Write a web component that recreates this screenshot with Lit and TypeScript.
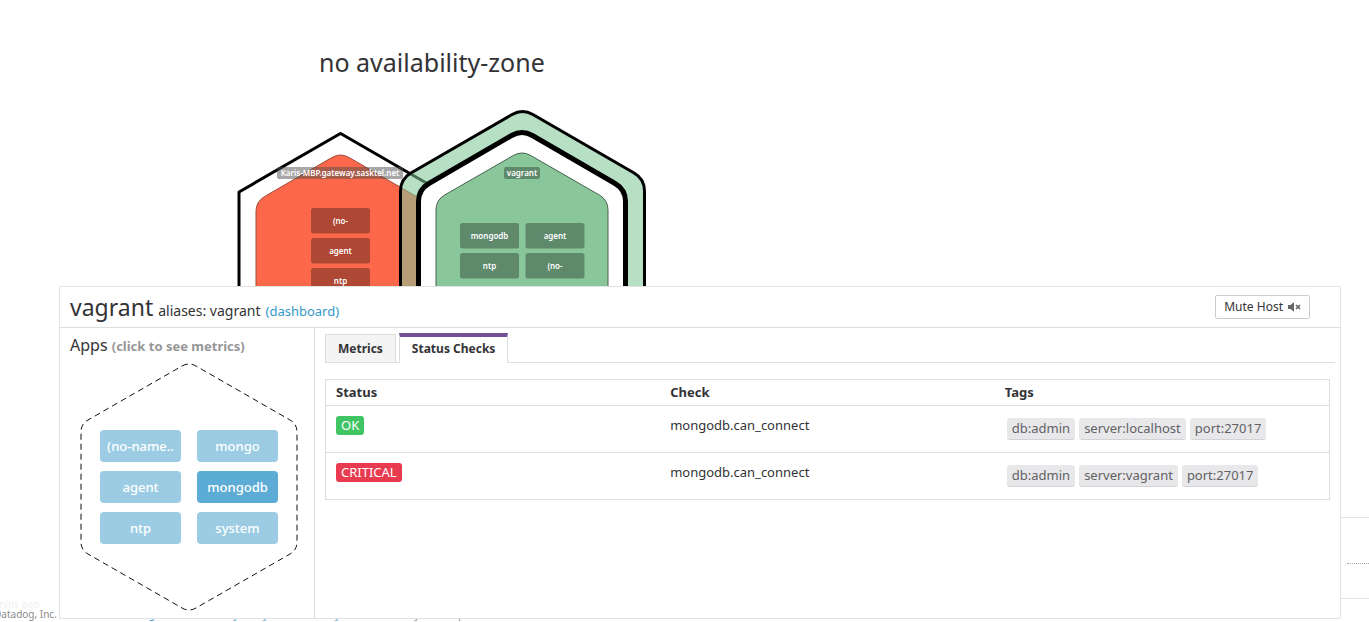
import { LitElement, html, css, svg } from "lit";
import { customElement, state } from "lit/decorators.js";
import { classMap } from "lit/directives/class-map.js";

type Point = [number, number];

/** Path of a closed polygon whose corners are rounded by the given distance. */
function roundedPath(points: Point[], r: number): string {
  const toward = (a: Point, b: Point): Point => {
    const d = Math.hypot(b[0] - a[0], b[1] - a[1]);
    return [a[0] + ((b[0] - a[0]) * r) / d, a[1] + ((b[1] - a[1]) * r) / d];
  };
  const n = points.length;
  return (
    points
      .map((p, i) => {
        const start = toward(p, points[(i + n - 1) % n]);
        const end = toward(p, points[(i + 1) % n]);
        return `${i ? "L" : "M"}${start.join(" ")}Q${p.join(" ")} ${end.join(" ")}`;
      })
      .join("") + "Z"
  );
}

/** Hexagon standing on its point: centre x, top y, half width, rise of the slope, side length. */
function hexagon(cx: number, top: number, half: number, rise: number, side: number, r: number): string {
  return roundedPath(
    [
      [cx, top],
      [cx + half, top + rise],
      [cx + half, top + rise + side],
      [cx, top + 2 * rise + side],
      [cx - half, top + rise + side],
      [cx - half, top + rise],
    ],
    r,
  );
}

@customElement("host-map")
export class HostMap extends LitElement {
  static styles = css`
    :host {
      display: block;
      height: 220px;
      overflow: hidden;
    }
    .map {
      display: block;
      overflow: visible;
    }
    .ring {
      fill: #fff;
      stroke: #000;
    }
    .halo {
      fill: rgba(127, 198, 150, 0.565);
      stroke: #000;
      stroke-width: 3px;
    }
    .alert {
      fill: #fd684a;
      stroke: #9c4a3a;
    }
    .good {
      fill: #89c79b;
      stroke: #46604e;
    }
    .chip {
      fill: rgba(0, 0, 0, 0.31);
    }
    .tag {
      fill: rgba(80, 80, 80, 0.5);
    }
    text {
      fill: #fff;
      font-size: 8px;
      font-weight: 600;
      text-anchor: middle;
    }
  `;

  private chip(x: number, y: number, label: string) {
    return svg`<rect class="chip" x=${x} y=${y} width="59" height="25.5" rx="2.5"></rect>
      <text x=${x + 29.5} y=${y + 16}>${label}</text>`;
  }

  render() {
    return html`<svg class="map" width="420" height="240" viewBox="230 100 420 240" role="img" aria-label="Host map">
      <path class="ring" stroke-width="3" d=${hexagon(340.5, 133.5, 101.5, 58.5, 118, 0.1)} />
      <path class="alert" d=${hexagon(340.5, 152.5, 84.5, 49, 100, 10)} />
      <rect class="tag" x="277" y="167" width="126" height="12" rx="2" />
      <text x="340" y="176">Karis-MBP.gateway.sasktel.net</text>
      ${this.chip(311, 208, "(no-")} ${this.chip(311, 238, "agent")} ${this.chip(311, 268, "ntp")}
      <path class="halo" d=${hexagon(522.5, 108.5, 122, 70.5, 140, 12)} />
      <path class="ring" stroke-width="5" d=${hexagon(522, 129.5, 103.5, 60, 120, 12)} />
      <path class="good" d=${hexagon(522, 150.5, 86, 49.5, 100, 10)} />
      <rect class="chip" x="504" y="167" width="36" height="12" rx="2" />
      <text x="522" y="176">vagrant</text>
      ${this.chip(460, 223, "mongodb")} ${this.chip(525.5, 223, "agent")} ${this.chip(460, 253, "ntp")}
      ${this.chip(525.5, 253, "(no-")}
    </svg>`;
  }
}

@customElement("host-apps")
export class HostApps extends LitElement {
  @state() private selected = "mongodb";

  static styles = css`
    :host {
      display: grid;
      justify-items: center;
      align-items: center;
      padding-left: 4px;
    }
    .outline,
    .apps {
      grid-area: 1 / 1;
    }
    .outline {
      display: block;
      fill: none;
      stroke: #111;
      stroke-dasharray: 6 4;
    }
    .apps {
      display: grid;
      grid-template-columns: 81px 81px;
      gap: 9px 16px;
    }
    .app {
      height: 32px;
      padding: 0;
      border: 0;
      border-radius: 4px;
      background: #9bcce3;
      color: #fff;
      font: 500 13px/20px "Noto Sans", sans-serif;
    }
    .app.selected {
      background: #5dacd5;
    }
  `;

  render() {
    const apps = ["(no-name..", "mongo", "agent", "mongodb", "ntp", "system"];
    return html`<svg class="outline" width="218" height="248" viewBox="0 0 218 248" aria-hidden="true">
        <path d=${hexagon(109, -1, 108, 62, 126, 8)} />
      </svg>
      <div class="apps">
        ${apps.map(
          (a) =>
            html`<button class=${classMap({ app: true, selected: a === this.selected })} @click=${() => (this.selected = a)}>
              ${a}
            </button>`,
        )}
      </div>`;
  }
}

@customElement("status-table")
export class StatusTable extends LitElement {
  static styles = css`
    :host {
      display: block;
    }
    table {
      width: 100%;
      table-layout: fixed;
      border-collapse: collapse;
      border: 1px solid #ddd;
    }
    tr {
      border-bottom: 1px solid #ddd;
    }
    th,
    td {
      padding: 0 10px;
      text-align: left;
    }
    th {
      height: 23px;
      padding-bottom: 2px;
      font-size: 13px;
      font-weight: 700;
      line-height: 18px;
    }
    td {
      height: 36px;
      padding-top: 10px;
      vertical-align: top;
      font-size: 13px;
      line-height: 19px;
    }
    .state {
      display: inline-block;
      padding: 0 5px;
      border-radius: 3px;
      color: #fff;
    }
    .ok {
      background: #41c464;
    }
    .critical {
      background: #e83b50;
    }
    .tags {
      display: flex;
      gap: 4px;
      padding: 2px;
    }
    .tag {
      padding: 0 5px;
      border-bottom: 1px solid #d3d3d5;
      border-radius: 3px;
      background: #e8e8ea;
      color: #626264;
      line-height: 21px;
    }
  `;

  render() {
    const rows = [
      { state: "OK", check: "mongodb.can_connect", tags: ["db:admin", "server:localhost", "port:27017"] },
      { state: "CRITICAL", check: "mongodb.can_connect", tags: ["db:admin", "server:vagrant", "port:27017"] },
    ];
    return html`<table>
      <thead>
        <tr>
          <th>Status</th>
          <th>Check</th>
          <th>Tags</th>
        </tr>
      </thead>
      <tbody>
        ${rows.map(
          (r) => html`<tr>
            <td><span class="state ${r.state.toLowerCase()}">${r.state}</span></td>
            <td>${r.check}</td>
            <td><div class="tags">${r.tags.map((t) => html`<span class="tag">${t}</span>`)}</div></td>
          </tr>`,
        )}
      </tbody>
    </table>`;
  }
}

@customElement("app-root")
export class AppRoot extends LitElement {
  static styles = css`
    :host {
      display: block;
      position: relative;
      min-height: 100vh;
      overflow: hidden;
      background: #fff;
      color: #333336;
      font-family: "Noto Sans", sans-serif;
    }
    .backdrop {
      display: grid;
      grid-template-columns: 1fr 28px;
    }
    .zone {
      padding: 45px 0 0 230px;
    }
    .zone-name {
      margin: 0 0 21px 89px;
      font-size: 25px;
      font-weight: 400;
      line-height: 34px;
    }
    .legend {
      align-self: end;
      margin-top: 517px;
      height: 80px;
      border-top: 1px solid #e4e4e4;
      border-bottom: 1px solid #e4e4e4;
    }
    .rule {
      margin: 45px 0 0 6px;
      border: 0;
      border-top: 1px dotted #aaa;
    }
    .foot {
      white-space: nowrap;
      font-size: 10px;
      line-height: 10px;
      color: #8a8a8c;
    }
    .updated {
      color: #efefef;
      margin: 0 0 0 -4px;
    }
    .legal {
      margin: 0 0 0 -6px;
    }
    a {
      color: #3598c8;
      text-decoration: none;
    }
    .panel {
      position: absolute;
      top: 286px;
      left: 59px;
      right: 28px;
      min-height: 331px;
      display: flex;
      flex-direction: column;
      border: 1px solid #e2e2e2;
      border-radius: 2px;
      background: #fff;
    }
    .head {
      display: flex;
      align-items: center;
      justify-content: space-between;
      height: 40px;
      padding: 0 30px 0 10px;
      border-bottom: 1px solid #ddd;
    }
    .host {
      display: flex;
      align-items: baseline;
      gap: 5px;
      font-size: 14px;
    }
    .name {
      margin: 0;
      font-size: 23px;
      font-weight: 400;
      line-height: 34px;
    }
    .dash {
      font-size: 13px;
    }
    .mute {
      display: flex;
      align-items: center;
      gap: 5px;
      height: 24px;
      padding: 0 8px;
      border: 1px solid #ccc;
      border-radius: 2px;
      background: #fff;
      color: #333336;
      font: 12px/20px "Noto Sans", sans-serif;
    }
    .body {
      flex: 1;
      display: grid;
      grid-template-columns: 255px 1fr;
    }
    .side {
      border-right: 1px solid #ddd;
    }
    .side-title {
      margin: 6px 0 6px 10px;
      font-size: 16px;
      font-weight: 400;
      line-height: 22px;
    }
    .hint {
      color: #969698;
      font-size: 13px;
      font-weight: 700;
    }
    .content {
      padding: 5px 5px 0 10px;
    }
    .tabs {
      display: flex;
      align-items: flex-end;
      gap: 3px;
      border-bottom: 1px solid #ddd;
      margin-bottom: 16px;
    }
    .tab {
      height: 28px;
      padding: 0 12px;
      border: 1px solid #ddd;
      border-bottom: 0;
      background: #f4f4f4;
      color: #333336;
      font: 700 12px/20px "Noto Sans", sans-serif;
    }
    .tab.active {
      height: 30px;
      margin-bottom: -1px;
      padding-bottom: 2px;
      border-top: 4px solid #764f96;
      background: #fff;
    }
    .checks {
      margin-right: 5px;
    }
  `;

  @state() private tab = "Status Checks";

  render() {
    return html`
      <div class="backdrop">
        <main class="zone">
          <h1 class="zone-name">no availability-zone</h1>
          <host-map></host-map>
        </main>
        <aside class="legend"><hr class="rule" /></aside>
      </div>
      <footer class="foot">
        <p class="updated">mins ago</p>
        <p class="legal">
          Datadog, Inc. 2016 – 5.1.1234 – <a href="#">Agreement</a> – <a href="#">Privacy Policy</a> –
          <a href="#">Cookie Policy</a> – Status → All Systems Operational
        </p>
      </footer>
      <section class="panel" aria-label="Host details">
        <header class="head">
          <div class="host">
            <h2 class="name">vagrant</h2>
            <span>aliases: vagrant</span>
            <a class="dash" href="#">(dashboard)</a>
          </div>
          <button class="mute">
            Mute Host
            <svg width="13" height="10" viewBox="0 0 13 10" aria-hidden="true">
              <path d="M0 3h2.5L6 .3v9.4L2.5 7H0z" fill="#666" />
              <path d="M8 3l4 4M12 3l-4 4" stroke="#666" stroke-width="1.7" />
            </svg>
          </button>
        </header>
        <div class="body">
          <div class="side">
            <h3 class="side-title">Apps <span class="hint">(click to see metrics)</span></h3>
            <host-apps></host-apps>
          </div>
          <div class="content">
            <div class="tabs" role="tablist">
              ${["Metrics", "Status Checks"].map(
                (t) => html`<button
                  role="tab"
                  aria-selected=${t === this.tab}
                  class=${classMap({ tab: true, active: t === this.tab })}
                  @click=${() => (this.tab = t)}
                >
                  ${t}
                </button>`,
              )}
            </div>
            <status-table class="checks"></status-table>
          </div>
        </div>
      </section>
    `;
  }
}
